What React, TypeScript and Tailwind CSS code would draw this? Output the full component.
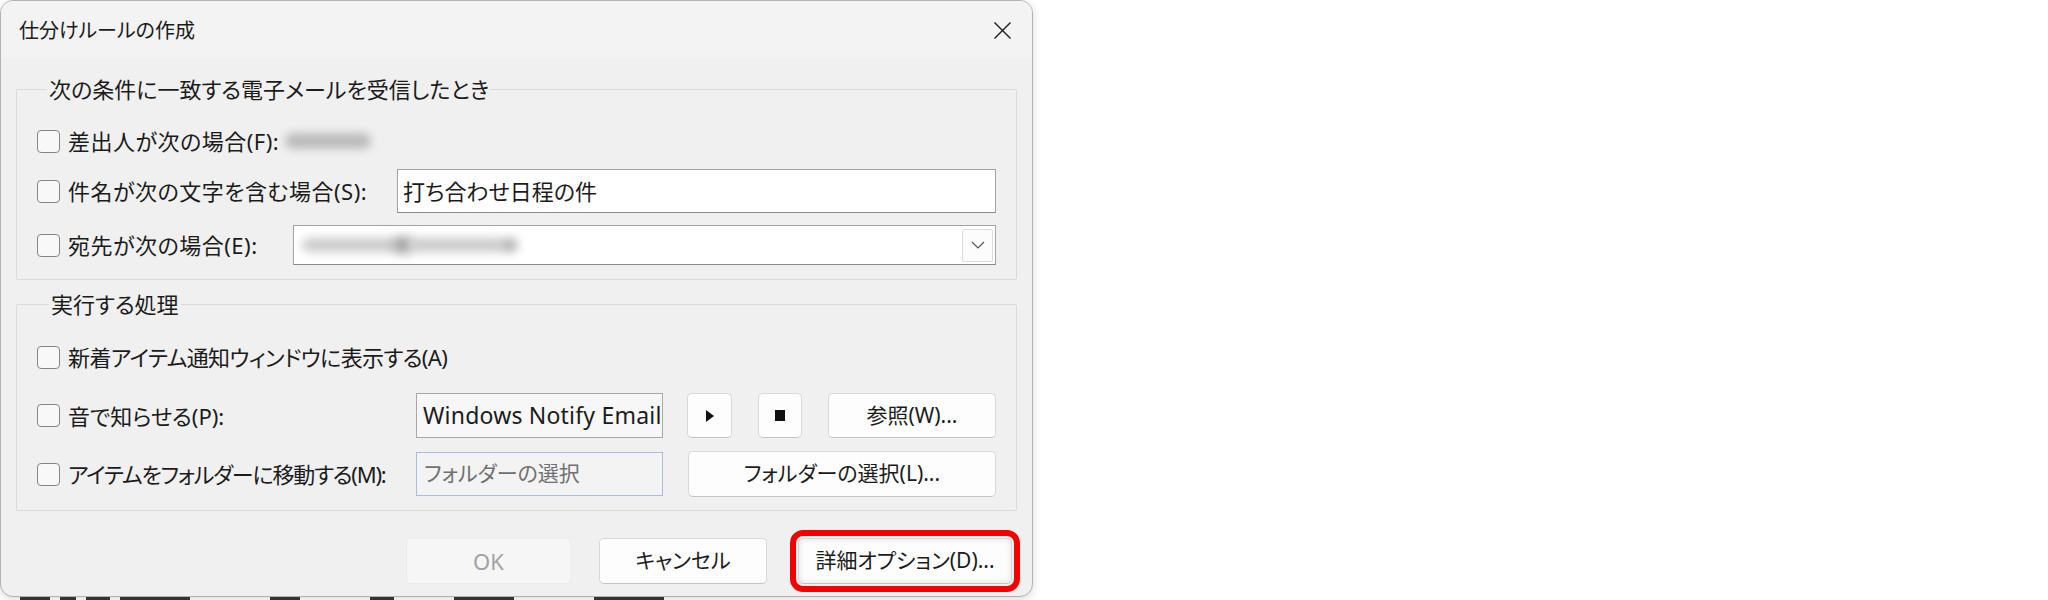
import React from 'react';

function Checkbox() {
  return (
    <span className="block h-[23px] w-[23px] shrink-0 rounded-[4px] border border-[#858585] bg-[#f8f8f8]" />
  );
}

function Btn({
  children,
  className = '',
}: {
  children: React.ReactNode;
  className?: string;
}) {
  return (
    <button
      type="button"
      className={`flex shrink-0 items-center justify-center rounded-[5px] border border-[#d8d8d8] border-b-[#c4c4c4] bg-[#fdfdfd] text-[21px] text-[#1b1b1b] ${className}`}
    >
      {children}
    </button>
  );
}

function CheckRow({
  label,
  tracking = '',
  children,
}: {
  label: string;
  tracking?: string;
  children?: React.ReactNode;
}) {
  return (
    <div className="flex items-center gap-[8px]">
      <Checkbox />
      <span className={`whitespace-nowrap text-[22px] leading-none ${tracking}`}>{label}</span>
      {children}
    </div>
  );
}

export default function App() {
  return (
    <div className="h-[600px] w-[2048px] overflow-hidden bg-white font-['Noto_Sans','Noto_Sans_CJK_JP',sans-serif] text-[#1b1b1b] [font-feature-settings:'palt']">
      <div className="flex h-[597px] w-[1033px] flex-col overflow-hidden rounded-[13px] border border-[#b2b2b2] bg-[#f0f0f0] shadow-[0_2px_8px_rgba(0,0,0,0.15)]">
        {/* title bar */}
        <div className="flex h-[57px] shrink-0 items-center justify-between bg-[#f3f3f3] pl-[18px] pr-[20px] pt-[2px]">
          <span className="text-[20px] leading-none">仕分けルールの作成</span>
          <svg width="19" height="19" viewBox="0 0 19 19" fill="none" stroke="#1b1b1b" strokeWidth="1.4">
            <path d="M1.5 1.5 17.5 17.5M17.5 1.5 1.5 17.5" />
          </svg>
        </div>

        <div className="flex flex-col px-[15px]">
          {/* conditions */}
          <fieldset className="mt-[19px] flex flex-col rounded-[2px] border border-[#dadada] pl-[20px] pr-[20px] pb-[14px]">
            <legend className="ml-[10px] px-[2px] text-[22px] leading-[24px]">
              次の条件に一致する電子メールを受信したとき
            </legend>
            <div className="mt-[18px] flex h-[44px] items-center">
              <CheckRow label="差出人が次の場合(F):" tracking="tracking-[0.5px]">
                <span className="ml-[-2px] block h-[16px] w-[86px] rounded-full bg-[#bcbcbc] blur-[4px]" />
              </CheckRow>
            </div>
            <div className="mt-[6px] flex h-[44px] items-center">
              <CheckRow label="件名が次の文字を含む場合(S):" tracking="tracking-[0.5px]" />
              <div className="ml-auto flex h-[44px] w-[599px] items-center border border-[#a3a3a3] border-b-[#8a8a8a] bg-white pl-[5px] text-[22px]">
                打ち合わせ日程の件
              </div>
            </div>
            <div className="mt-[12px] flex h-[40px] items-center">
              <CheckRow label="宛先が次の場合(E):" tracking="tracking-[0.5px]" />
              <div className="ml-auto flex h-[40px] w-[703px] items-center border border-[#a3a3a3] border-b-[#8a8a8a] bg-white pl-[8px] pr-[2px]">
                <div className="flex items-center">
                  <span className="block h-[14px] w-[96px] rounded-full bg-[#cbcbcb] blur-[5px]" />
                  <span className="ml-[-6px] block h-[18px] w-[22px] rounded-full bg-[#a8a8a8] blur-[5px]" />
                  <span className="ml-[-6px] block h-[14px] w-[96px] rounded-full bg-[#cbcbcb] blur-[5px]" />
                  <span className="ml-[-4px] block h-[14px] w-[18px] rounded-full bg-[#b4b4b4] blur-[5px]" />
                </div>
                <div className="ml-auto flex h-[33px] w-[31px] items-center justify-center rounded-[2px] border border-[#dcdcdc] bg-[#fcfcfc]">
                  <svg width="14" height="8" viewBox="0 0 14 8" fill="none" stroke="#555" strokeWidth="1.2">
                    <path d="M1 1l6 6 6-6" />
                  </svg>
                </div>
              </div>
            </div>
          </fieldset>

          {/* actions */}
          <fieldset className="mt-[12px] flex flex-col rounded-[2px] border border-[#dadada] pl-[20px] pr-[20px] pb-[13px]">
            <legend className="ml-[12px] px-[2px] text-[22px] leading-[24px]">実行する処理</legend>
            <div className="mt-[19px] flex h-[44px] items-center">
              <CheckRow label="新着アイテム通知ウィンドウに表示する(A)" tracking="tracking-[-0.6px]" />
            </div>
            <div className="mt-[14px] flex h-[45px] items-center">
              <CheckRow label="音で知らせる(P):" />
              <div className="ml-auto flex items-center">
                <div className="flex h-[45px] w-[247px] items-center overflow-hidden whitespace-nowrap border border-[#a8a8a8] bg-[#f7f7f7] pl-[6px] text-[23px] tracking-[0.2px]">
                  Windows Notify Email
                </div>
                <Btn className="ml-[24px] h-[45px] w-[45px]">
                  <svg width="8" height="12" viewBox="0 0 8 12" fill="#111">
                    <path d="M0 0l8 6-8 6z" />
                  </svg>
                </Btn>
                <Btn className="ml-[26px] h-[45px] w-[44px]">
                  <span className="block h-[11px] w-[10px] bg-[#111]" />
                </Btn>
                <Btn className="ml-[26px] h-[45px] w-[168px]">参照(W)...</Btn>
              </div>
            </div>
            <div className="mt-[13px] flex h-[46px] items-center">
              <CheckRow label="アイテムをフォルダーに移動する(M):" tracking="tracking-[-1.2px]" />
              <div className="ml-auto flex items-center">
                <div className="flex h-[44px] w-[247px] items-center border border-[#a5bedd] bg-[#f3f3f3] pl-[7px] text-[21px] text-[#707070]">
                  フォルダーの選択
                </div>
                <Btn className="ml-[25px] h-[46px] w-[308px]">フォルダーの選択(L)...</Btn>
              </div>
            </div>
          </fieldset>

          {/* footer */}
          <div className="mt-[27px] flex items-center">
            <button
              type="button"
              className="ml-[390px] flex h-[46px] w-[165px] items-center justify-center rounded-[5px] border border-[#ececec] bg-[#f6f6f6] text-[22px] text-[#a2a2a2]"
            >
              OK
            </button>
            <Btn className="ml-[28px] h-[46px] w-[168px]">キャンセル</Btn>
            <Btn className="ml-[31px] h-[46px] w-[214px] shadow-[inset_0_0_6px_rgba(0,0,0,0.12)] outline-[6px] outline-offset-[2px] outline-[#f30000] outline-solid">
              詳細オプション(D)...
            </Btn>
          </div>
        </div>
      </div>
      <div className="flex h-[3px] w-[1033px] items-stretch gap-[10px] pl-[20px]">
        <span className="w-[30px] bg-[#333]" />
        <span className="w-[16px] bg-[#333]" />
        <span className="w-[24px] bg-[#333]" />
        <span className="w-[70px] bg-[#333]" />
        <span className="ml-[70px] w-[30px] bg-[#333]" />
        <span className="ml-[60px] w-[24px] bg-[#333]" />
        <span className="ml-[50px] w-[60px] bg-[#333]" />
        <span className="ml-[70px] w-[70px] bg-[#333]" />
      </div>
    </div>
  );
}
